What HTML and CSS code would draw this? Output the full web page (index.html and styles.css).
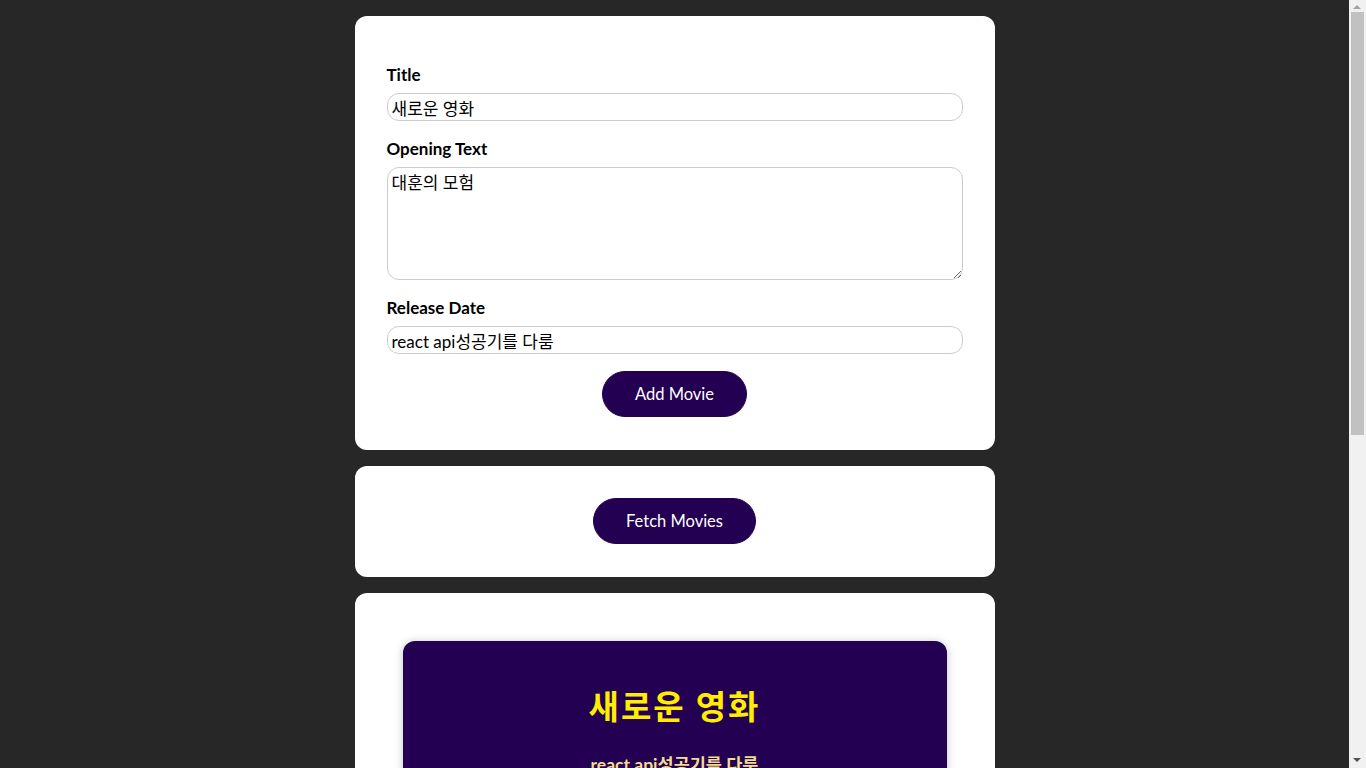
FILE: index.html
```html
<!DOCTYPE html>
<html lang="ko">
<head>
<meta charset="utf-8">
<title>React Movies</title>
<link rel="stylesheet" href="styles.css">
</head>
<body>
  <section class="card card-form">
    <form class="form">
      <div class="control">
        <label for="title">Title</label>
        <input id="title" type="text" value="새로운 영화">
      </div>
      <div class="control">
        <label for="opening">Opening Text</label>
        <textarea id="opening" rows="5">대훈의 모험</textarea>
      </div>
      <div class="control">
        <label for="date">Release Date</label>
        <input id="date" type="text" value="react api성공기를 다룸">
      </div>
      <button type="button" class="btn">Add Movie</button>
    </form>
  </section>
  <section class="card card-fetch">
    <button type="button" class="btn">Fetch Movies</button>
  </section>
  <section class="card">
    <ul class="movies">
      <li class="movie">
        <h2>새로운 영화</h2>
        <h3>react api성공기를 다룸</h3>
        <p>대훈의 모험</p>
      </li>
      <li class="movie">
        <h2>새로운 영화</h2>
        <h3>react api성공기를 다룸</h3>
        <p>대훈의 모험</p>
      </li>
    </ul>
  </section>
  <div class="scrollbar" aria-hidden="true">
    <div class="sb-arrow sb-up"></div>
    <div class="sb-thumb"></div>
    <div class="sb-arrow sb-down"></div>
  </div>
</body>
</html>
```
FILE: styles.css
```css
* {
  box-sizing: border-box;
}

html {
  font-family: Lato, "Noto Sans CJK KR", sans-serif;
}

body {
  margin: 0;
  background-color: #272727;
  padding: 0 17px 1px 0;
}

.card {
  margin: 16px auto;
  width: 640px;
  max-width: 90%;
  text-align: center;
  border-radius: 12px;
  background-color: #ffffff;
  padding: 32px;
}

.card-form {
  padding-top: 48px;
  padding-bottom: 33px;
}

.card-fetch {
  padding-bottom: 33px;
}

.form {
  text-align: left;
}

.control {
  margin-bottom: 17px;
}

.control label {
  display: block;
  font-weight: bold;
  font-size: 17px;
  line-height: 21px;
  margin-bottom: 8px;
  color: #000;
}

.control input,
.control textarea {
  display: block;
  width: 100%;
  font: inherit;
  font-size: 17px;
  line-height: 20px;
  padding: 3px 4px;
  border-radius: 12px;
  border: 1px solid #cccccc;
  color: #000;
  background: #fff;
  margin: 0;
}

.control input {
  height: 28px;
}

.control textarea {
  height: 113px;
  padding-top: 5px;
  resize: vertical;
}

.btn {
  display: block;
  margin: 0 auto;
  font: inherit;
  font-size: 16.5px;
  line-height: 20px;
  cursor: pointer;
  background: #230052;
  border: 1px solid #230052;
  color: #ffffff;
  padding: 12px 32px;
  border-radius: 24px;
}

.movies {
  list-style: none;
  margin: 0;
  padding: 0;
}

.movie {
  margin: 16px;
  padding: 16px;
  text-align: center;
  border-radius: 12px;
  background-color: #230052;
  box-shadow: 0 1px 8px rgba(0, 0, 0, 0.25);
}

.movie h2 {
  font-size: 33px;
  line-height: 42px;
  letter-spacing: 2px;
  font-weight: bold;
  color: #ffee00;
  margin: 28px 0 27px;
}

.movie h3 {
  font-size: 17.5px;
  line-height: 22px;
  font-weight: bold;
  color: #f2dc8f;
  margin: 0 0 20px;
}

.movie p {
  font-size: 17px;
  color: #ffffff;
  margin: 0 0 40px;
}

.scrollbar {
  position: fixed;
  top: 0;
  right: 0;
  width: 17px;
  height: 100vh;
  background: #f1f1f1;
}

.sb-thumb {
  position: absolute;
  left: 2px;
  top: 12px;
  width: 13px;
  height: 423px;
  background: #c1c1c1;
}

.sb-arrow {
  position: absolute;
  left: 4px;
  width: 0;
  height: 0;
  border-left: 4px solid transparent;
  border-right: 4px solid transparent;
}

.sb-up {
  top: 5px;
  border-bottom: 4px solid #a3a3a3;
}

.sb-down {
  bottom: 6px;
  border-top: 4px solid #505050;
}
```
